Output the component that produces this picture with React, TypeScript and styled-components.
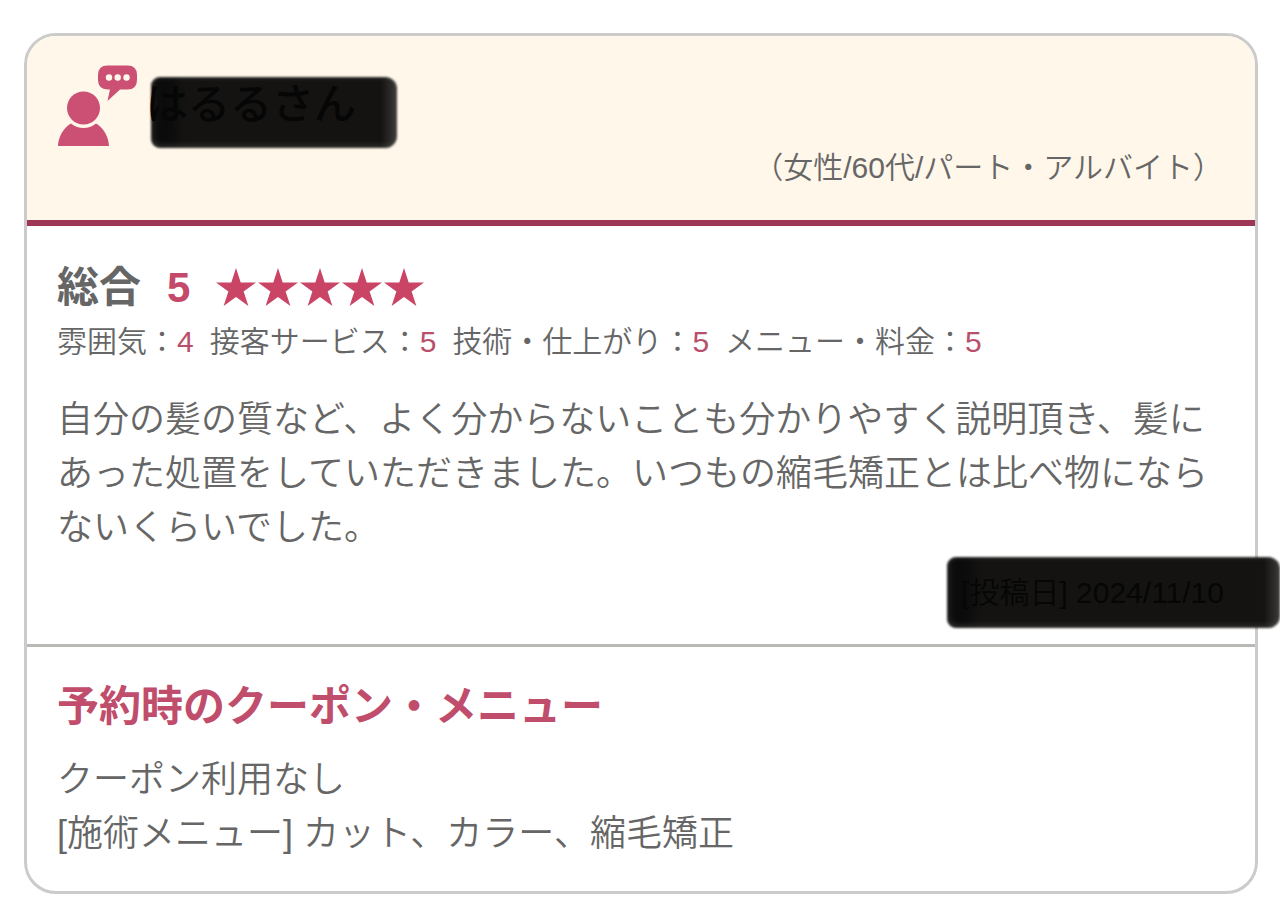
import React from "react";
import styled, { createGlobalStyle } from "styled-components";

const GlobalStyle = createGlobalStyle`
  *, *::before, *::after { box-sizing: border-box; }
  html, body { margin: 0; background: #fff; overflow-x: hidden; }
  body {
    font-family: "Liberation Sans", "Noto Sans CJK JP", sans-serif;
    font-weight: 350;
    color: #666;
  }
  h2, h3, p, dl, dt, dd { margin: 0; font-weight: inherit; }
`;

const Page = styled.main`
  padding: 33px 22px 12px 24px;
`;

const Card = styled.article`
  border: 3px solid #cbcbc9;
  border-radius: 32px;
  background: #fff;
`;

const CardHeader = styled.header`
  padding: 29px 32px 32px 30px;
  background: #fff7ea;
  border-bottom: 6px solid #9d3755;
  border-radius: 29px 29px 0 0;
`;

const Reviewer = styled.div`
  display: flex;
  align-items: flex-start;
  gap: 9px;
`;

const ReviewerIcon = styled.svg`
  width: 80px;
  height: 81px;
  flex: none;
`;

const Marker = styled.span<{ $size: "name" | "date" }>`
  position: relative;
  z-index: 0;
  color: #060606;

  &::before {
    content: "";
    position: absolute;
    z-index: -1;
    top: ${(p) => (p.$size === "name" ? "-6px" : "-16px")};
    left: ${(p) => (p.$size === "name" ? "5px" : "-14px")};
    right: ${(p) => (p.$size === "name" ? "-41px" : "-56px")};
    height: 71px;
    border-radius: 9px 12px 12px 9px;
    background: linear-gradient(90deg, #161616 0, #0b0b0b 10px, #0c0c0c 20px, #141312 34px, #141312 calc(100% - 16px), #3d3b38 100%);
    box-shadow: inset 0 -3px 5px rgba(80, 78, 74, 0.5), inset 0 2px 3px rgba(80, 78, 74, 0.4);
    filter: blur(1px);
  }
`;

const ReviewerName = styled.h2`
  padding-top: 18px;
  font-size: 42px;
  line-height: 44px;
  font-weight: 500;
`;

const NameMarker = styled(Marker)`
  display: block;
`;

const Profile = styled.p`
  margin-top: 2px;
  font-size: 30px;
  line-height: 40px;
  text-align: right;
`;

const Section = styled.section`
  padding: 32px 31px 31px 30px;

  & + & {
    padding-top: 30px;
    padding-bottom: 30px;
    border-top: 3px solid #bbb9b5;
  }
`;

const Overall = styled.div`
  display: flex;
  gap: 26px;
  font-size: 42px;
  line-height: 60px;
  font-weight: 700;
`;

const Score = styled.span`
  color: #c4496a;
`;

const Stars = styled.span`
  display: flex;
  align-items: center;
  gap: 2px;
`;

const StarIcon = styled.svg`
  width: 40px;
  height: 40px;
  fill: #c94465;
`;

const Ratings = styled.dl`
  display: flex;
  flex-wrap: wrap;
  column-gap: 16px;
  margin-top: 2px;
  font-size: 30px;
  line-height: 44px;
`;

const Rating = styled.div`
  display: flex;
`;

const RatingValue = styled.dd`
  color: #b8506c;
`;

const BodyText = styled.p<{ $gap: number }>`
  margin-top: ${(p) => p.$gap}px;
  font-size: 36px;
  line-height: 54px;
`;

const PostedRow = styled.div`
  display: flex;
  justify-content: flex-end;
  margin-top: 18px;
  font-size: 30px;
  line-height: 40px;
`;

const CouponTitle = styled.h3`
  font-size: 42px;
  line-height: 60px;
  font-weight: 700;
  color: #bf4d6b;
`;

const ratings = [
  { label: "雰囲気", value: 4 },
  { label: "接客サービス", value: 5 },
  { label: "技術・仕上がり", value: 5 },
  { label: "メニュー・料金", value: 5 },
];

export default function App() {
  return (
    <>
      <GlobalStyle />
      <Page lang="ja">
        <Card>
          <CardHeader>
            <Reviewer>
              <ReviewerIcon viewBox="0 0 80 81" aria-hidden="true">
                <g fill="#cb5074">
                  <circle cx="26.500" cy="43" r="16.500" />
                  <path d="M1 81C1.500 71 6.500 63 14 58.500C21.500 64.500 31.500 64.500 39 58.500C46.500 63 51.500 71 52 81Z" />
                  <path d="M50.500 0.500H70.500Q80 0.500 80 10V15Q80 24.500 70.500 24.500H63L50.500 36L53 24.500H50.500Q41 24 41 15V10Q41 0.500 50.500 0.500Z" />
                </g>
                <g fill="#fff7ea">
                  <circle cx="52" cy="12.500" r="3.200" />
                  <circle cx="60.700" cy="12.500" r="3.200" />
                  <circle cx="69.500" cy="12.500" r="3.200" />
                </g>
              </ReviewerIcon>
              <ReviewerName>
                <NameMarker $size="name">はるるさん</NameMarker>
              </ReviewerName>
            </Reviewer>
            <Profile>（女性/60代/パート・アルバイト）</Profile>
          </CardHeader>

          <Section>
            <Overall>
              <span>総合</span>
              <Score>5</Score>
              <Stars role="img" aria-label="5つ星">
                {[1, 2, 3, 4, 5].map((n) => (
                  <StarIcon key={n} viewBox="0 0 40 40">
                    <path d="M20 0L24.700 14.500H40L27.600 23.500L32.400 38L20 29L7.600 38L12.400 23.500L0 14.500H15.300Z" />
                  </StarIcon>
                ))}
              </Stars>
            </Overall>
            <Ratings>
              {ratings.map((r) => (
                <Rating key={r.label}>
                  <dt>{r.label}：</dt>
                  <RatingValue>{r.value}</RatingValue>
                </Rating>
              ))}
            </Ratings>
            <BodyText $gap={29}>
              自分の髪の質など、よく分からないことも分かりやすく説明頂き、髪にあった処置をしていただきました。いつもの縮毛矯正とは比べ物にならないくらいでした。
            </BodyText>
            <PostedRow>
              <Marker $size="date">[投稿日] 2024/11/10</Marker>
            </PostedRow>
          </Section>

          <Section>
            <CouponTitle>予約時のクーポン・メニュー</CouponTitle>
            <BodyText $gap={16}>
              クーポン利用なし
              <br />
              [施術メニュー] カット、カラー、縮毛矯正
            </BodyText>
          </Section>
        </Card>
      </Page>
    </>
  );
}
